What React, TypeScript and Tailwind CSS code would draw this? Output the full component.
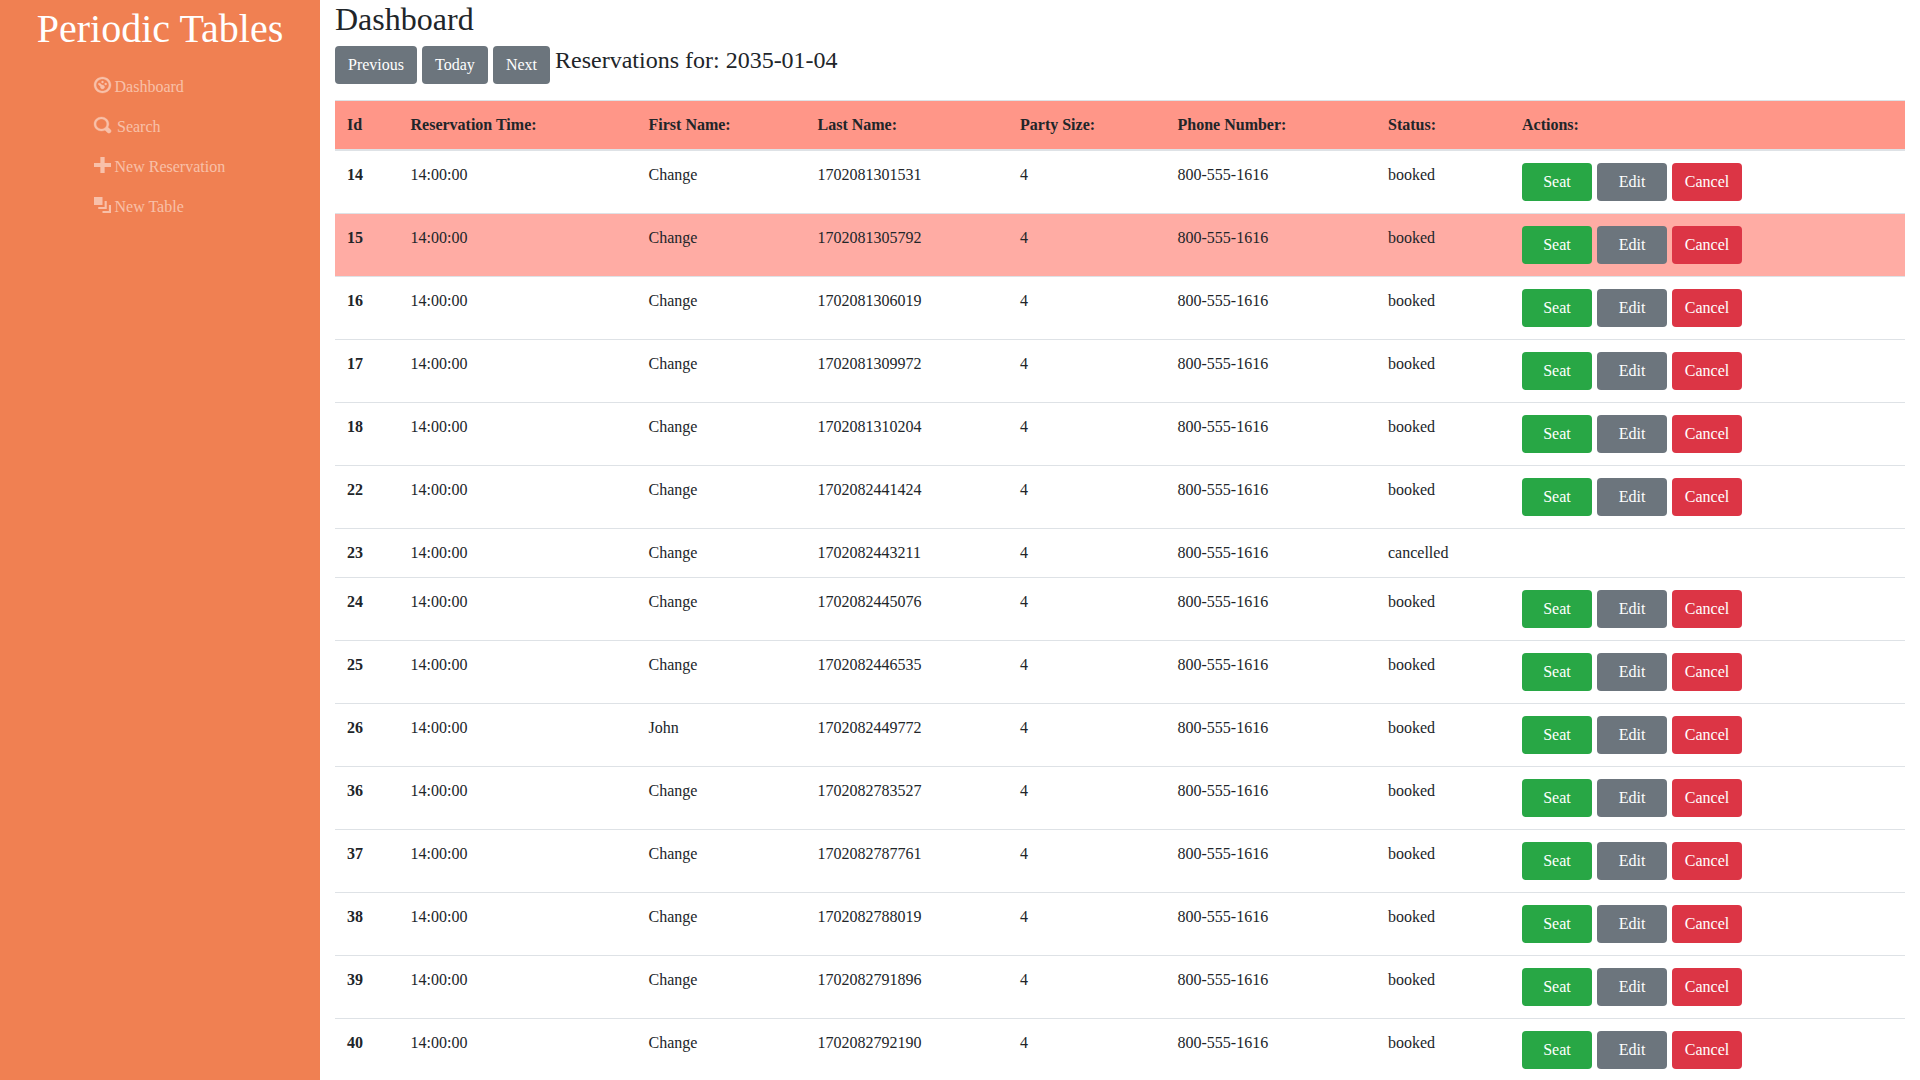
type NavItem = { label: string; icon: string; gap: string; weight: number };
type Reservation = { id: number; first: string; last: string; status: string };

const navItems: NavItem[] = [
  {
    label: "Dashboard",
    gap: "ml-[3.5px]",
    weight: 0.15,
    icon: "M4 0c-2.2 0-4 1.8-4 4s1.8 4 4 4 4-1.8 4-4-1.8-4-4-4zm0 1c1.66 0 3 1.34 3 3s-1.34 3-3 3-3-1.34-3-3 1.34-3 3-3zm0 1c-.28 0-.5.22-.5.5s.22.5.5.5.5-.22.5-.5-.22-.5-.5-.5zm-1.66 1a.5.5 0 0 0-.19.84l.91.91c-.02.08-.06.16-.06.25 0 .55.45 1 1 1s1-.45 1-1-.45-1-1-1c-.09 0-.17.04-.25.06l-.91-.91a.5.5 0 0 0-.44-.16.5.5 0 0 0-.06 0zm3.16 0c-.28 0-.5.22-.5.5s.22.5.5.5.5-.22.5-.5-.22-.5-.5-.5z",
  },
  {
    label: "Search",
    gap: "ml-1.5",
    weight: 0.15,
    icon: "M3.5 0c-1.93 0-3.5 1.57-3.5 3.5s1.57 3.5 3.5 3.5c.59 0 1.17-.14 1.66-.41a1 1 0 0 0 .13.13l1 1a1.02 1.02 0 1 0 1.44-1.44l-1-1a1 1 0 0 0-.16-.13c.27-.49.44-1.06.44-1.66 0-1.93-1.55-3.5-3.5-3.5zm0 1c1.39 0 2.5 1.11 2.5 2.5 0 .66-.24 1.27-.66 1.72-.01.01-.02.02-.03.03a1 1 0 0 0-.13.13c-.44.4-1.04.63-1.69.63-1.39 0-2.5-1.11-2.5-2.5s1.11-2.5 2.5-2.5z",
  },
  { label: "New Reservation", gap: "ml-[3.5px]", weight: 0, icon: "M3 0v3h-3v2h3v3h2v-3h3v-2h-3v-3h-2z" },
  {
    label: "New Table",
    gap: "ml-[3.5px]",
    weight: 0,
    icon: "M0 0v4h4v-4h-4zm5 2v3h-3v1h4v-4h-1zm2 2v3h-3v1h4v-4h-1z",
  },
];

const reservations: Reservation[] = [
  { id: 14, first: "Change", last: "1702081301531", status: "booked" },
  { id: 15, first: "Change", last: "1702081305792", status: "booked" },
  { id: 16, first: "Change", last: "1702081306019", status: "booked" },
  { id: 17, first: "Change", last: "1702081309972", status: "booked" },
  { id: 18, first: "Change", last: "1702081310204", status: "booked" },
  { id: 22, first: "Change", last: "1702082441424", status: "booked" },
  { id: 23, first: "Change", last: "1702082443211", status: "cancelled" },
  { id: 24, first: "Change", last: "1702082445076", status: "booked" },
  { id: 25, first: "Change", last: "1702082446535", status: "booked" },
  { id: 26, first: "John", last: "1702082449772", status: "booked" },
  { id: 36, first: "Change", last: "1702082783527", status: "booked" },
  { id: 37, first: "Change", last: "1702082787761", status: "booked" },
  { id: 38, first: "Change", last: "1702082788019", status: "booked" },
  { id: 39, first: "Change", last: "1702082791896", status: "booked" },
  { id: 40, first: "Change", last: "1702082792190", status: "booked" },
];

const headings = [
  "Id",
  "Reservation Time:",
  "First Name:",
  "Last Name:",
  "Party Size:",
  "Phone Number:",
  "Status:",
  "Actions:",
];

const button = "h-[38px] rounded text-white text-base leading-6 whitespace-nowrap";

function Sidebar() {
  return (
    <nav className="w-80 shrink-0 bg-[#f08052]">
      <h1 className="pt-[5px] text-center text-[40px] leading-12 text-white">Periodic Tables</h1>
      <ul className="mt-3.5 pl-[94px]">
        {navItems.map((item) => (
          <li key={item.label}>
            <a className="flex h-10 items-center text-base leading-6 text-[#f8c0a9]">
              <svg
                viewBox="0 0 8 8"
                preserveAspectRatio="none"
                className="mb-1 h-4 w-[17px] overflow-visible fill-current stroke-current"
                strokeWidth={item.weight}
              >
                <path d={item.icon} />
              </svg>
              <span className={item.gap}>{item.label}</span>
            </a>
          </li>
        ))}
      </ul>
    </nav>
  );
}

function ReservationRow({ row, first, active }: { row: Reservation; first: boolean; active: boolean }) {
  const cell = `p-3 text-left align-top border-[#dee2e6] ${first ? "" : "border-t"}`;
  return (
    <tr className={active ? "bg-[#ffaca4]" : ""}>
      <th className={`${cell} font-bold`}>{row.id}</th>
      <td className={cell}>14:00:00</td>
      <td className={cell}>{row.first}</td>
      <td className={cell}>{row.last}</td>
      <td className={cell}>4</td>
      <td className={cell}>800-555-1616</td>
      <td className={cell}>{row.status}</td>
      <td className={cell}>
        {row.status === "booked" && (
          <div className="flex gap-[5px]">
            <button className={`${button} w-[70px] bg-[#28a745]`}>Seat</button>
            <button className={`${button} w-[70px] bg-[#6c757d]`}>Edit</button>
            <button className={`${button} w-[70px] bg-[#dc3545]`}>Cancel</button>
          </div>
        )}
      </td>
    </tr>
  );
}

export default function App() {
  return (
    <div className="flex h-screen overflow-hidden bg-white font-['Liberation_Serif',serif] text-base leading-6 text-[#212529]">
      <Sidebar />
      <main className="w-[1600px] px-[15px]">
        <h2 className="text-[32px] leading-[38px]">Dashboard</h2>
        <div className="mt-2 flex gap-[5px]">
          <button className={`${button} w-[82px] bg-[#6c757d]`}>Previous</button>
          <button className={`${button} w-[66px] bg-[#6c757d]`}>Today</button>
          <button className={`${button} w-[57px] bg-[#6c757d]`}>Next</button>
          <h4 className="text-2xl leading-[29px]">Reservations for: 2035-01-04</h4>
        </div>
        <table className="mt-4 w-[1570px] table-fixed border-separate border-spacing-0">
          <colgroup>
            <col className="w-[63.5px]" />
            <col className="w-[238px]" />
            <col className="w-[169px]" />
            <col className="w-[202.5px]" />
            <col className="w-[157.5px]" />
            <col className="w-[210.5px]" />
            <col className="w-[134px]" />
            <col className="w-[395px]" />
          </colgroup>
          <thead>
            <tr className="bg-[#ff9688]">
              {headings.map((heading) => (
                <th key={heading} className="border-t border-b-2 border-[#dee2e6] p-3 text-left font-bold">
                  {heading}
                </th>
              ))}
            </tr>
          </thead>
          <tbody>
            {reservations.map((row, index) => (
              <ReservationRow key={row.id} row={row} first={index === 0} active={row.id === 15} />
            ))}
          </tbody>
        </table>
      </main>
    </div>
  );
}
